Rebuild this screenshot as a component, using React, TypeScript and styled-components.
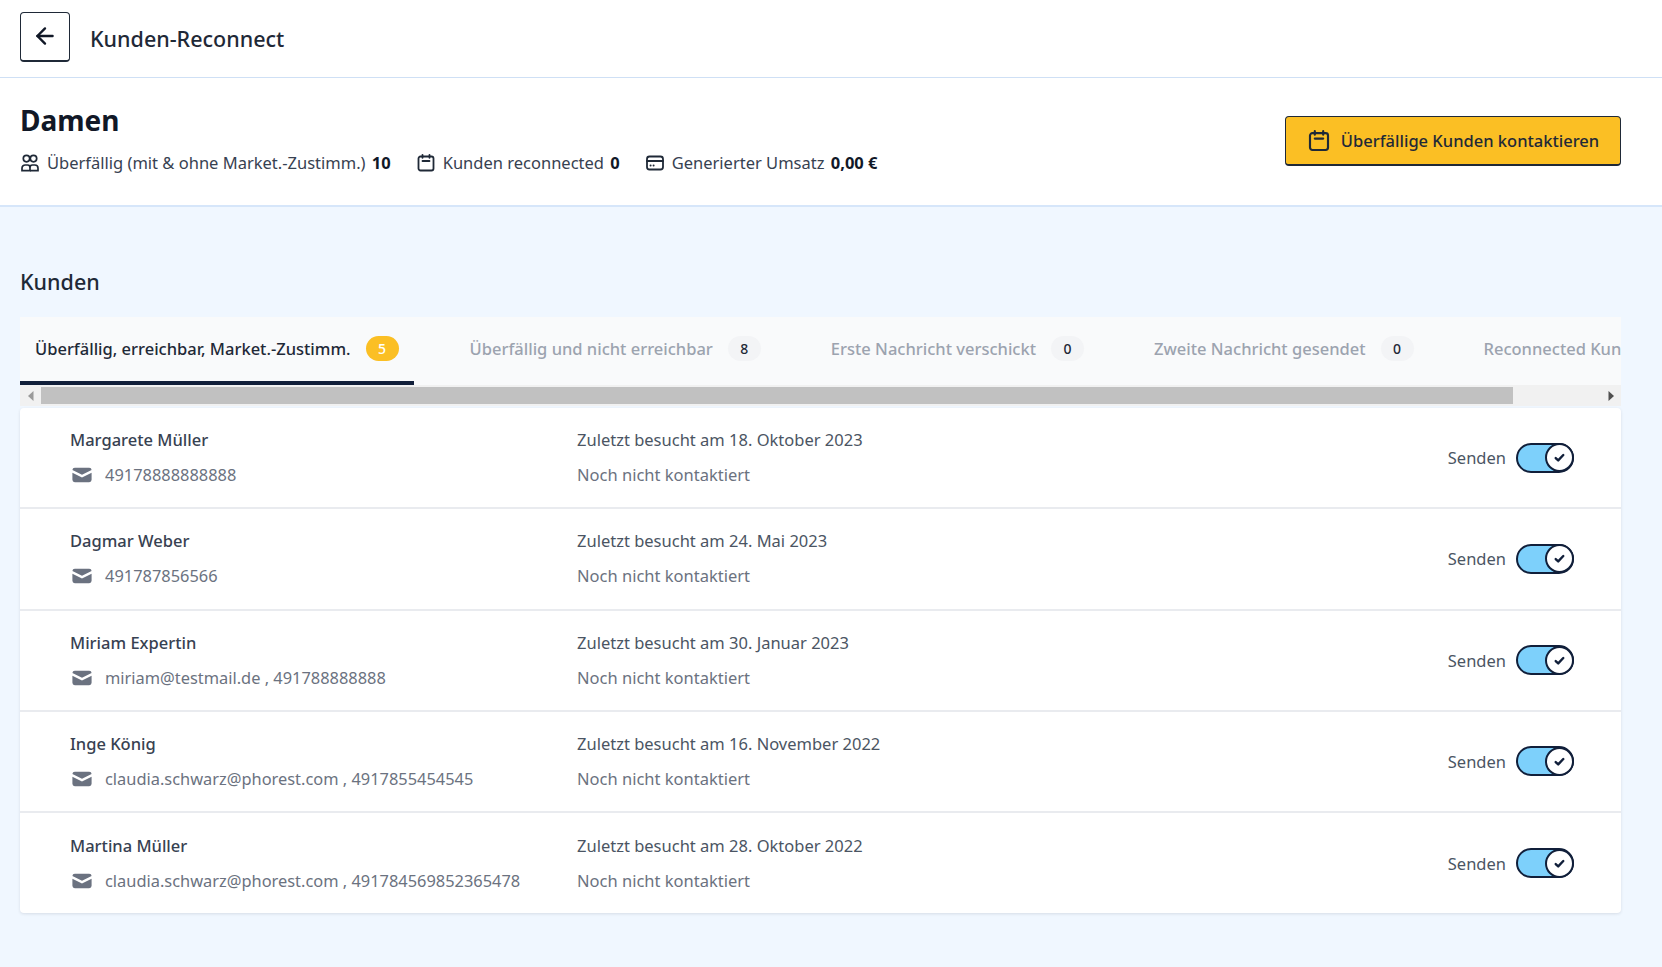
import React from "react";
import styled, { createGlobalStyle } from "styled-components";
import { ArrowLeft } from "lucide-react";
import { HiMail } from "react-icons/hi";

const GlobalStyle = createGlobalStyle`
  html, body {
    margin: 0;
    padding: 0;
    background: #f0f7ff;
    font-family: "Noto Sans", "Open Sans", sans-serif;
    color: #1f2937;
  }
  * { box-sizing: border-box; }
`;

const Page = styled.div`
  width: 1662px;
  height: 967px;
  overflow: hidden;
  background: #f0f7ff;
`;

const TopBar = styled.header`
  display: flex;
  align-items: center;
  gap: 20px;
  height: 78px;
  padding: 0 20px 4px;
  background: #fff;
  border-bottom: 1px solid #cfe0f5;
`;

const BackButton = styled.button`
  display: flex;
  align-items: center;
  justify-content: center;
  width: 50px;
  height: 50px;
  padding: 0 0 1px;
  background: #fff;
  color: #111827;
  border: 1px solid #1f2937;
  border-bottom-width: 2px;
  border-radius: 4px;
`;

const PageTitle = styled.h1`
  margin: 0;
  padding-top: 4px;
  font-size: 21.5px;
  font-weight: 500;
  color: #1f2937;
`;

const Summary = styled.section`
  display: flex;
  align-items: center;
  justify-content: space-between;
  height: 129px;
  padding: 0 41px 0 20px;
  background: #fff;
  border-bottom: 2px solid #d6e6fa;
`;

const SummaryText = styled.div`
  padding-bottom: 9px;
`;

const Heading = styled.h2`
  margin: 0 0 13px;
  font-size: 28px;
  line-height: 38px;
  font-weight: 700;
  color: #111827;
`;

const Stats = styled.div`
  display: flex;
  align-items: center;
  gap: 25px;
`;

const Stat = styled.div`
  display: flex;
  align-items: center;
  gap: 7px;
  font-size: 16.5px;
  line-height: 22px;
  color: #374151;

  svg {
    flex: none;
    color: #1f2937;
  }

  b {
    margin-left: 2px;
    font-weight: 700;
    color: #111827;
  }
`;

const CtaButton = styled.button`
  display: flex;
  align-items: center;
  justify-content: center;
  gap: 10px;
  width: 336px;
  height: 50px;
  margin-bottom: 1px;
  background: #fbbf24;
  color: #1f2937;
  border: 1px solid #1f2937;
  border-bottom-width: 2px;
  border-radius: 4px;
  font-family: inherit;
  font-size: 16.5px;
  font-weight: 500;
`;

const Content = styled.main`
  padding: 60px 41px 0 20px;
`;

const SectionTitle = styled.h3`
  margin: 0 0 20px;
  font-size: 21.5px;
  line-height: 30px;
  font-weight: 500;
  color: #1f2937;
`;

const TabViewport = styled.div`
  overflow: hidden;
  background: #f9fafb;
`;

const TabList = styled.div`
  display: flex;
  width: max-content;
  height: 68px;
`;

const Tab = styled.div<{ $active?: boolean }>`
  display: flex;
  align-items: center;
  gap: 15px;
  height: 68px;
  padding: 0 15px 1px;
  margin-right: ${(p) => (p.$active ? "41px" : "40px")};
  font-size: 16.5px;
  font-weight: 500;
  white-space: nowrap;
  color: ${(p) => (p.$active ? "#1f2937" : "#9ca3af")};
  border-bottom: 4px solid ${(p) => (p.$active ? "#111f3a" : "transparent")};

  &:last-child {
    margin-right: 0;
  }
`;

const Count = styled.span<{ $active?: boolean }>`
  display: flex;
  align-items: center;
  justify-content: center;
  min-width: 33px;
  height: 25px;
  border-radius: 13px;
  font-size: 14px;
  background: ${(p) => (p.$active ? "#fbbf24" : "#f3f4f6")};
  color: ${(p) => (p.$active ? "#fff" : "#1f2937")};
`;

const ScrollTrack = styled.div`
  display: flex;
  align-items: stretch;
  height: 21px;
  background: #f1f1f1;
`;

const ScrollArrow = styled.span<{ $dark?: boolean }>`
  display: flex;
  align-items: center;
  justify-content: center;
  flex: none;
  width: 21px;
  color: ${(p) => (p.$dark ? "#505050" : "#9a9a9a")};
`;

const ScrollThumb = styled.span`
  flex: none;
  width: 1472px;
  margin: 2px 0;
  background: #c1c1c1;
`;

const ScrollGap = styled.span`
  flex: 1;
`;

const Card = styled.div`
  margin-top: 2px;
  background: #fff;
  border-radius: 4px;
  box-shadow: 0 1px 3px rgba(31, 41, 55, 0.12);
`;

const Row = styled.div`
  display: grid;
  grid-template-columns: 507px 1fr auto;
  align-items: center;
  height: 101.25px;
  padding: 0 47px 0 50px;
  border-bottom: 2px solid #e9ebef;

  &:last-child {
    height: 100px;
    border-bottom: 0;
  }
`;

const Cell = styled.div`
  display: flex;
  flex-direction: column;
  gap: 13px;
`;

const Name = styled.div`
  margin: 1px 0 -1px;
  font-size: 16.5px;
  line-height: 22px;
  font-weight: 500;
  color: #374151;
`;

const Contact = styled.div`
  display: flex;
  align-items: center;
  gap: 11px;
  font-size: 16.4px;
  line-height: 22px;
  color: #6b7280;

  svg {
    flex: none;
    color: #6b7280;
  }
`;

const Visited = styled.div`
  font-size: 16.5px;
  line-height: 22px;
  color: #4b5563;
`;

const Status = styled.div`
  font-size: 16.5px;
  line-height: 22px;
  color: #6b7280;
`;

const SendControl = styled.label`
  display: flex;
  align-items: center;
  gap: 10px;
  font-size: 16.5px;
  color: #4b5563;
`;

const Switch = styled.span`
  display: flex;
  align-items: center;
  justify-content: flex-end;
  width: 58px;
  height: 30px;
  background: #7dd0fb;
  border: 2.5px solid #111f3a;
  border-radius: 15px;
`;

const SwitchThumb = styled.span`
  display: flex;
  align-items: center;
  justify-content: center;
  flex: none;
  width: 29px;
  height: 29px;
  margin-right: -2px;
  background: #fff;
  border: 2.5px solid #111f3a;
  border-radius: 50%;
`;

const CalendarIcon = ({ size = 20 }: { size?: number }) => (
  <svg width={size} height={size} viewBox="0 0 20 20" fill="none" stroke="currentColor" strokeWidth="1.8" strokeLinecap="round">
    <rect x="2.5" y="3.5" width="15" height="14" rx="2" />
    <path d="M6.5 1.8v3M13.5 1.8v3M6.5 8h7" />
  </svg>
);

const UsersIcon = () => (
  <svg width="20" height="20" viewBox="0 0 20 20" fill="none" stroke="currentColor" strokeWidth="1.7">
    <circle cx="6.5" cy="5.6" r="3.2" />
    <circle cx="13.5" cy="5.6" r="3.2" />
    <path d="M2 17.6v-2.4a3.2 3.2 0 0 1 3.2-3.2h2.4a2.4 2.4 0 0 1 2.4 2.4v3.2H2Z" />
    <path d="M10 14.4a2.4 2.4 0 0 1 2.4-2.4h2.4a3.2 3.2 0 0 1 3.2 3.2v2.4h-8" />
  </svg>
);

const RevenueIcon = () => (
  <svg width="20" height="20" viewBox="0 0 20 20" fill="none" stroke="currentColor" strokeWidth="1.8" strokeLinecap="round">
    <rect x="2" y="3.5" width="16" height="13" rx="2.5" />
    <path d="M2 8h16M5.5 12.5h.2M8.5 12.5h.2" />
  </svg>
);

const CUSTOMERS = [
  { name: "Margarete Müller", contact: "49178888888888", visited: "18. Oktober 2023" },
  { name: "Dagmar Weber", contact: "491787856566", visited: "24. Mai 2023" },
  { name: "Miriam Expertin", contact: "miriam@testmail.de , 491788888888", visited: "30. Januar 2023" },
  { name: "Inge König", contact: "claudia.schwarz@phorest.com , 4917855454545", visited: "16. November 2022" },
  { name: "Martina Müller", contact: "claudia.schwarz@phorest.com , 491784569852365478", visited: "28. Oktober 2022" },
];

const TABS = [
  { label: "Überfällig, erreichbar, Market.-Zustimm.", count: 5, active: true },
  { label: "Überfällig und nicht erreichbar", count: 8 },
  { label: "Erste Nachricht verschickt", count: 0 },
  { label: "Zweite Nachricht gesendet", count: 0 },
  { label: "Reconnected Kunden", count: 0 },
];

const App = () => {
  return (
    <Page>
      <GlobalStyle />
      <TopBar>
        <BackButton aria-label="Zurück">
          <ArrowLeft size={26} strokeWidth={2.2} />
        </BackButton>
        <PageTitle>Kunden-Reconnect</PageTitle>
      </TopBar>

      <Summary>
        <SummaryText>
          <Heading>Damen</Heading>
          <Stats>
            <Stat>
              <UsersIcon />
              <span>
                Überfällig (mit &amp; ohne Market.-Zustimm.) <b>10</b>
              </span>
            </Stat>
            <Stat>
              <CalendarIcon />
              <span>
                Kunden reconnected <b>0</b>
              </span>
            </Stat>
            <Stat>
              <RevenueIcon />
              <span>
                Generierter Umsatz <b>0,00 €</b>
              </span>
            </Stat>
          </Stats>
        </SummaryText>
        <CtaButton>
          <CalendarIcon size={24} />
          Überfällige Kunden kontaktieren
        </CtaButton>
      </Summary>

      <Content>
        <SectionTitle>Kunden</SectionTitle>
        <TabViewport>
          <TabList>
            {TABS.map((tab) => (
              <Tab key={tab.label} $active={tab.active}>
                {tab.label}
                <Count $active={tab.active}>{tab.count}</Count>
              </Tab>
            ))}
          </TabList>
        </TabViewport>
        <ScrollTrack aria-hidden="true">
          <ScrollArrow>
            <svg width="6" height="10" viewBox="0 0 6 10" fill="currentColor">
              <path d="M5.5 0v10L0 5z" />
            </svg>
          </ScrollArrow>
          <ScrollThumb />
          <ScrollGap />
          <ScrollArrow $dark>
            <svg width="6" height="10" viewBox="0 0 6 10" fill="currentColor">
              <path d="M.5 0v10L6 5z" />
            </svg>
          </ScrollArrow>
        </ScrollTrack>

        <Card>
          {CUSTOMERS.map((c) => (
            <Row key={c.name}>
              <Cell>
                <Name>{c.name}</Name>
                <Contact>
                  <HiMail size={24} />
                  {c.contact}
                </Contact>
              </Cell>
              <Cell>
                <Visited>Zuletzt besucht am {c.visited}</Visited>
                <Status>Noch nicht kontaktiert</Status>
              </Cell>
              <SendControl>
                Senden
                <Switch>
                  <SwitchThumb>
                    <svg width="13" height="13" viewBox="0 0 12 12" fill="none" stroke="#111f3a" strokeWidth="2.2" strokeLinecap="round" strokeLinejoin="round">
                      <path d="M2.5 6.5l2.3 2.2 4.7-5" />
                    </svg>
                  </SwitchThumb>
                </Switch>
              </SendControl>
            </Row>
          ))}
        </Card>
      </Content>
    </Page>
  );
};

export default App;
